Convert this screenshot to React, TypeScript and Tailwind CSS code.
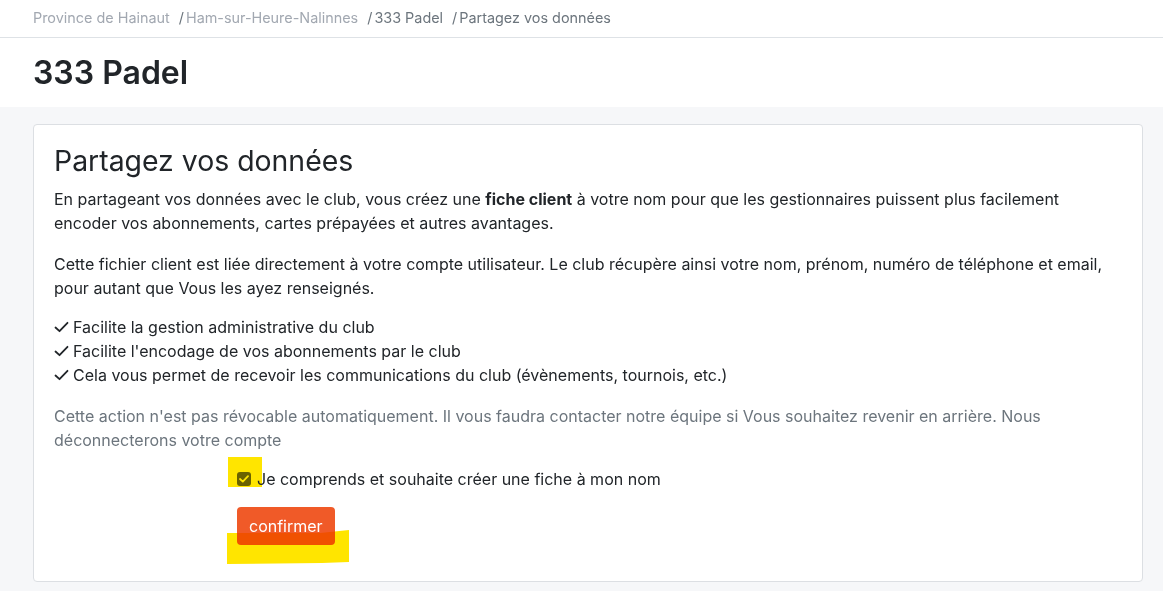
import React from "react";

const CRUMBS = [
  { label: "Province de Hainaut", muted: true },
  { label: "Ham-sur-Heure-Nalinnes", muted: true },
  { label: "333 Padel", muted: false },
  { label: "Partagez vos données", muted: false },
];

const BENEFITS = [
  "Facilite la gestion administrative du club",
  "Facilite l'encodage de vos abonnements par le club",
  "Cela vous permet de recevoir les communications du club (évènements, tournois, etc.)",
];

function Check() {
  return (
    <svg width="15" height="12" viewBox="0 0 15 12" className="shrink-0 mr-[4px]">
      <path d="M1.5 6.5 L5.5 10.2 L13.5 1.8" fill="none" stroke="#212529" strokeWidth="1.8" strokeLinecap="round" strokeLinejoin="round" />
    </svg>
  );
}

export default function App() {
  return (
    <div className="min-h-[591px] bg-[#f6f7f9] text-[#212529]" style={{ fontFamily: "Inter, 'Noto Sans', sans-serif" }}>
      {/* Breadcrumb */}
      <div className="bg-white border-b border-[#dee2e6] h-[38px] pl-[33px] flex items-center text-[14.4px] pb-[1px]">
        {CRUMBS.map((c, i) => (
          <span key={c.label} className={c.muted ? "text-[#a2a8b1]" : "text-[#6c757d]"}>
            {i > 0 && <span className="text-[#6c757d] ml-[9px]">/</span>}
            <span className={i > 0 ? "ml-[2px]" : ""}>{c.label}</span>
          </span>
        ))}
      </div>

      {/* Page title */}
      <div className="bg-white h-[69px] pl-[33px] flex items-center">
        <h1 className="text-[32px] font-semibold text-[#212529]">333 Padel</h1>
      </div>

      {/* Card */}
      <div className="pl-[33px] pr-[20px] pt-[17px] pb-[10px]">
        <div className="bg-white border border-[#dcdfe3] rounded-[4px] px-[20px] pt-[19px] pb-[36px] text-[16px] leading-[24px]">
          <h2 className="text-[28.4px] leading-[34px] font-normal mb-[9px]">Partagez vos données</h2>
          <p className="mb-[17px]">
            En partageant vos données avec le club, vous créez une <b className="font-bold">fiche client</b> à votre nom pour que les gestionnaires puissent plus facilement encoder vos abonnements, cartes prépayées et autres avantages.
          </p>
          <p className="mb-[15px]">
            Cette fichier client est liée directement à votre compte utilisateur. Le club récupère ainsi votre nom, prénom, numéro de téléphone et email, pour autant que Vous les ayez renseignés.
          </p>
          <ul className="mb-[17px]">
            {BENEFITS.map((b) => (
              <li key={b} className="flex items-center">
                <Check />
                {b}
              </li>
            ))}
          </ul>
          <p className="text-[#6c757d] mb-[15px]">
            Cette action n'est pas révocable automatiquement. Il vous faudra contacter notre équipe si Vous souhaitez revenir en arrière. Nous déconnecterons votre compte
          </p>

          <div className="pl-[183px]">
            <label className="relative flex items-center h-[24px]">
              <span className="absolute left-[-9px] top-[-10px] w-[34px] h-[30px] bg-[#ffe500]" />
              <span className="relative w-[14px] h-[14px] rounded-[3px] bg-[#6a6200] flex items-center justify-center">
                <svg width="10" height="8" viewBox="0 0 10 8">
                  <path d="M1 4 L3.8 6.6 L9 1.2" fill="none" stroke="#ffe500" strokeWidth="1.8" strokeLinecap="round" strokeLinejoin="round" />
                </svg>
              </span>
              <span className="relative ml-[6px]">Je comprends et souhaite créer une fiche à mon nom</span>
            </label>

            <div className="relative mt-[16px] h-[38px]">
              <button className="relative bg-[#f05a28] text-white rounded-[4px] px-[12px] h-[38px] text-[16px]">
                confirmer
              </button>
              <svg
                className="absolute left-[-10px] top-[23px] mix-blend-multiply pointer-events-none"
                width="123"
                height="34"
                viewBox="0 0 123 34"
              >
                <path d="M0 3 L93 3 L122 0 L122 32 L95 33 L0 34 Z" fill="#ffe500" />
              </svg>
            </div>
          </div>
        </div>
      </div>
    </div>
  );
}
